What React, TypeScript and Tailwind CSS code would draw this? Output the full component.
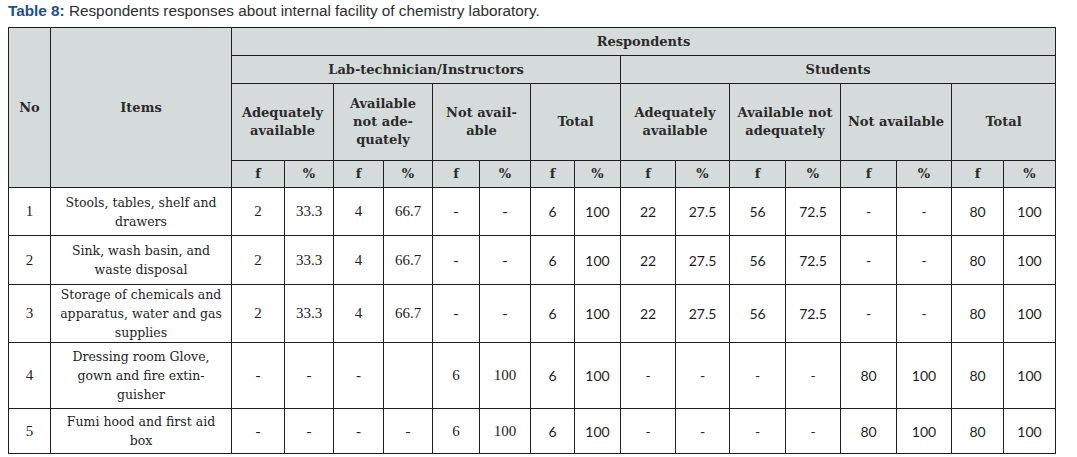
import React from 'react';

type Row = {
  no: string;
  item: string[];
  lab: string[];
  total: [string, string];
  students: string[];
  rowH: string;
};

const rows: Row[] = [
  {
    no: '1',
    item: ['Stools, tables, shelf and', 'drawers'],
    lab: ['2', '33.3', '4', '66.7', '-', '-'],
    total: ['6', '100'],
    students: ['22', '27.5', '56', '72.5', '-', '-', '80', '100'],
    rowH: 'h-[48px]',
  },
  {
    no: '2',
    item: ['Sink, wash basin, and', 'waste disposal'],
    lab: ['2', '33.3', '4', '66.7', '-', '-'],
    total: ['6', '100'],
    students: ['22', '27.5', '56', '72.5', '-', '-', '80', '100'],
    rowH: 'h-[49px]',
  },
  {
    no: '3',
    item: ['Storage of chemicals and', 'apparatus, water and gas', 'supplies'],
    lab: ['2', '33.3', '4', '66.7', '-', '-'],
    total: ['6', '100'],
    students: ['22', '27.5', '56', '72.5', '-', '-', '80', '100'],
    rowH: 'h-[58px]',
  },
  {
    no: '4',
    item: ['Dressing room Glove,', 'gown and fire extin-', 'guisher'],
    lab: ['-', '-', '-', '', '6', '100'],
    total: ['6', '100'],
    students: ['-', '-', '-', '-', '80', '100', '80', '100'],
    rowH: 'h-[66px]',
  },
  {
    no: '5',
    item: ['Fumi hood and first aid', 'box'],
    lab: ['-', '-', '-', '-', '6', '100'],
    total: ['6', '100'],
    students: ['-', '-', '-', '-', '80', '100', '80', '100'],
    rowH: 'h-[45px]',
  },
];

const colWidths = [42, 181, 53, 49, 50, 49, 47, 51, 44, 46, 55, 54, 56, 55, 56, 55, 52, 52];

const serif = "font-['Liberation_Serif',serif]";
const wideSerif = "font-['DejaVu_Serif',serif]";
const sans = "font-['Lato',sans-serif]";

const cell = 'border border-[#1f1f1f] text-center align-middle p-0';
const head = `${cell} bg-[#d5dbdb] font-bold text-[#2a2a2a] text-[13px] leading-[18px] ${wideSerif}`;

function Lines({ lines }: { lines: string[] }) {
  return (
    <>
      {lines.map((l, i) => (
        <React.Fragment key={i}>
          {i > 0 && <br />}
          {l}
        </React.Fragment>
      ))}
    </>
  );
}

export default function App() {
  return (
    <div className="w-[1077px] h-[457px] bg-white overflow-hidden">
      <p className="pl-[8px] pt-[2px] h-[27px] text-[15.3px] leading-[17px] text-[#2e2e2e] font-['Liberation_Sans',Arial,sans-serif]">
        <span className="font-bold text-[#244f8c]">Table 8:</span> Respondents responses about internal facility of chemistry laboratory.
      </p>
      <table className="ml-[8px] w-[1047px] table-fixed border-collapse">
        <colgroup>
          {colWidths.map((w, i) => (
            <col key={i} style={{ width: w }} />
          ))}
        </colgroup>
        <thead>
          <tr className="h-[28px]">
            <th rowSpan={4} className={head}>No</th>
            <th rowSpan={4} className={head}>Items</th>
            <th colSpan={16} className={head}>Respondents</th>
          </tr>
          <tr className="h-[28px]">
            <th colSpan={8} className={head}>Lab-technician/Instructors</th>
            <th colSpan={8} className={head}>Students</th>
          </tr>
          <tr className="h-[77px]">
            <th colSpan={2} className={head}><Lines lines={['Adequately', 'available']} /></th>
            <th colSpan={2} className={head}><Lines lines={['Available', 'not ade-', 'quately']} /></th>
            <th colSpan={2} className={head}><Lines lines={['Not avail-', 'able']} /></th>
            <th colSpan={2} className={head}>Total</th>
            <th colSpan={2} className={head}><Lines lines={['Adequately', 'available']} /></th>
            <th colSpan={2} className={head}><Lines lines={['Available not', 'adequately']} /></th>
            <th colSpan={2} className={head}>Not available</th>
            <th colSpan={2} className={head}>Total</th>
          </tr>
          <tr className="h-[27px]">
            {Array.from({ length: 8 }).map((_, i) => (
              <React.Fragment key={i}>
                <th className={head}>f</th>
                <th className={head}>%</th>
              </React.Fragment>
            ))}
          </tr>
        </thead>
        <tbody className="text-[#1e1e1e]">
          {rows.map((r) => (
            <tr key={r.no} className={r.rowH}>
              <td className={`${cell} ${serif} text-[15px]`}>{r.no}</td>
              <td className={`${cell} ${wideSerif} text-[12.5px] leading-[19px]`}>
                <Lines lines={r.item} />
              </td>
              {r.lab.map((v, i) => (
                <td key={i} className={`${cell} ${serif} text-[15px]`}>{v}</td>
              ))}
              {[...r.total, ...r.students].map((v, i) => (
                <td key={i} className={`${cell} ${sans} text-[14px]`}>{v}</td>
              ))}
            </tr>
          ))}
        </tbody>
      </table>
    </div>
  );
}
